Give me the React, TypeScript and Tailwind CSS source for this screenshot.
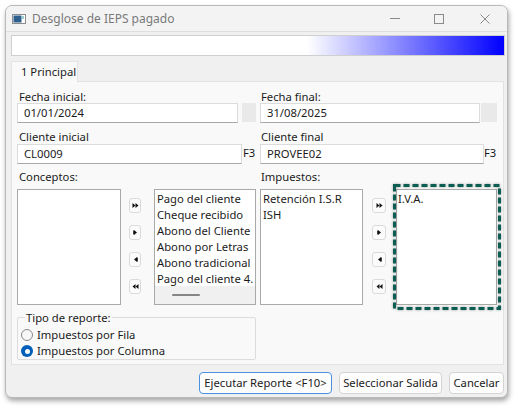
import React from "react";

const font = { fontFamily: '"Noto Sans", "Open Sans", sans-serif' };

function Arrow({ dir }: { dir: "rr" | "r" | "l" | "ll" }) {
  const pts: Record<string, string[]> = {
    rr: ["0.5,0 3.5,2.5 0.5,5", "3.5,0 6.5,2.5 3.5,5"],
    r: ["2,0 5,2.5 2,5"],
    l: ["5,0 2,2.5 5,5"],
    ll: ["3.5,0 0.5,2.5 3.5,5", "6.5,0 3.5,2.5 6.5,5"],
  };
  return (
    <svg width="7" height="5" viewBox="0 0 7 5">
      {pts[dir].map((p, i) => (
        <polygon key={i} points={p} fill="#111" />
      ))}
      {dir === "r" && <rect x="1" y="0.5" width="0.8" height="4" fill="#111" />}
      {dir === "l" && <rect x="5.2" y="0.5" width="0.8" height="4" fill="#111" />}
    </svg>
  );
}

function ArrowButtons({ w }: { w: string }) {
  const dirs: ("rr" | "r" | "l" | "ll")[] = ["rr", "r", "l", "ll"];
  return (
    <div className={`${w} flex flex-col pt-[9px] gap-[12px]`}>
      {dirs.map((d) => (
        <div
          key={d}
          className="h-[15px] w-full flex items-center justify-center bg-[#fbfbfb] border border-[#dadada] rounded-[3px]"
        >
          <Arrow dir={d} />
        </div>
      ))}
    </div>
  );
}

function Label({ children, cls = "" }: { children: React.ReactNode; cls?: string }) {
  return <div className={`h-[13px] leading-[13px] text-[#1b1b1b] ${cls}`}>{children}</div>;
}

function Input({ value, w }: { value: string; w: string }) {
  return (
    <div
      className={`${w} h-[20px] bg-white border border-[#dcdcdc] border-b-[#a8a8a8] pl-[6px] leading-[18px] text-[#1b1b1b]`}
    >
      {value}
    </div>
  );
}

export default function App() {
  const conceptos = [
    "Pago del cliente",
    "Cheque recibido",
    "Abono del Cliente",
    "Abono por Letras",
    "Abono tradicional",
    "Pago del cliente 4.",
  ];
  return (
    <div className="w-[518px] h-[409px] bg-white pt-[5px] pl-[5px] text-[11.25px]" style={font}>
      <div className="w-[503px] h-[393px] bg-[#f0f0f0] border border-[#b9b9b9] rounded-[7px] shadow-[1px_3px_5px_rgba(0,0,0,0.35)] flex flex-col overflow-hidden">
        {/* Title bar */}
        <div className="h-[26px] bg-[#f3f3f3] border-b border-[#dedede] flex items-center">
          <div className="ml-[6px] w-[14px] h-[10px]">
            <svg width="14" height="10" viewBox="0 0 14 10">
              <rect x="0.5" y="0.5" width="13" height="9" fill="#fff" stroke="#8c8c8c" />
              <rect x="1.5" y="1.5" width="8" height="7" fill="#2f5f8c" />
              <rect x="10.5" y="2" width="1" height="3" fill="#3aa0a0" />
            </svg>
          </div>
          <div className="ml-[6px] text-[12px] text-[#7a7a7a]">Desglose de IEPS pagado</div>
          <div className="ml-auto flex items-center h-full">
            <div className="w-[10px] h-[1px] bg-[#8a8a8a] mr-[34px]" />
            <div className="w-[10px] h-[10px] border border-[#8a8a8a] mr-[36px]" />
            <svg width="10" height="10" viewBox="0 0 10 10" className="mr-[17px]">
              <path d="M0.5 0.5 L9.5 9.5 M9.5 0.5 L0.5 9.5" stroke="#8a8a8a" strokeWidth="1" />
            </svg>
          </div>
        </div>

        <div className="flex-1 pl-[5px] pr-[1px] flex flex-col">
          {/* gradient bar */}
          <div className="mt-[3px] w-[494px] h-[21px] border border-[#cfcfcf] bg-[linear-gradient(to_right,#ffffff_60%,#0000ff)]" />

          {/* tab */}
          <div className="mt-[5px] flex">
            <div className="w-[67px] h-[21px] bg-[#f9f9f9] border border-[#e4e4e4] border-b-0 pl-[9px] leading-[20px] whitespace-nowrap text-[#1b1b1b] relative z-10 -mb-px">
              1 Principal
            </div>
          </div>

          {/* panel */}
          <div className="w-[493px] h-[284px] bg-[#f9f9f9] border border-[#e2e2e2] pl-[5px] pt-[8px] flex flex-col">
            <div className="flex gap-[4px]">
              {/* left column */}
              <div className="w-[239px] flex flex-col">
                <Label cls="pl-[2px]">Fecha inicial:</Label>
                <div className="flex">
                  <Input value="01/01/2024" w="w-[221px]" />
                  <div className="ml-[4px] w-[14px] h-[19px] bg-[#e9e9e9]" />
                </div>
                <Label cls="pl-[2px] mt-[7px]">Cliente inicial</Label>
                <div className="flex mt-[1px]">
                  <Input value="CL0009" w="w-[225px]" />
                  <div className="w-[14px] h-[20px] leading-[18px] pl-[1px] text-[#1b1b1b]">F3</div>
                </div>
                <Label cls="pl-[2px] mt-[6px]">Conceptos:</Label>
                <div className="flex mt-[6px] h-[116px]">
                  <div className="w-[104px] h-full bg-white border border-[#a9a9a9]" />
                  <div className="w-[8px]" />
                  <ArrowButtons w="w-[12px]" />
                  <div className="w-[13px]" />
                  <div className="w-[102px] h-full bg-white border border-[#a9a9a9] flex flex-col overflow-hidden">
                    <div className="flex-1 pt-[1px] pl-[2px] overflow-hidden">
                      {conceptos.map((c) => (
                        <div key={c} className="h-[16px] leading-[16px] whitespace-nowrap text-[#1b1b1b]">
                          {c}
                        </div>
                      ))}
                    </div>
                    <div className="h-[18px] bg-[#f0f0f0] flex items-center shrink-0">
                      <div className="ml-[17px] w-[28px] h-[2px] rounded-full bg-[#858585]" />
                    </div>
                  </div>
                </div>
              </div>

              {/* right column */}
              <div className="w-[237px] flex flex-col">
                <Label cls="pl-[1px]">Fecha final:</Label>
                <div className="flex">
                  <Input value="31/08/2025" w="w-[221px]" />
                  <div className="ml-[1px] w-[16px] h-[19px] bg-[#e9e9e9]" />
                </div>
                <Label cls="pl-[1px] mt-[7px]">Cliente final</Label>
                <div className="flex mt-[1px]">
                  <Input value="PROVEE02" w="w-[224px]" />
                  <div className="w-[13px] h-[20px] leading-[18px] text-[#1b1b1b]">F3</div>
                </div>
                <Label cls="pl-[1px] mt-[6px]">Impuestos:</Label>
                <div className="flex mt-[6px] h-[116px]">
                  <div className="w-[103px] h-full bg-white border border-[#a9a9a9] pt-[1px] pl-[2px]">
                    <div className="h-[16px] leading-[16px] text-[#1b1b1b] whitespace-nowrap">Retención I.S.R</div>
                    <div className="h-[16px] leading-[16px] text-[#1b1b1b]">ISH</div>
                  </div>
                  <div className="w-[9px]" />
                  <ArrowButtons w="w-[14px]" />
                  <div className="w-[10px]" />
                  <div className="relative w-[101px] h-full bg-white border border-[#a9a9a9] pt-[1px] pl-[1px]">
                    <div className="h-[16px] leading-[16px] text-[#1b1b1b]">I.V.A.</div>
                    <svg
                      className="absolute left-[-4px] top-[-6px] pointer-events-none"
                      width="109"
                      height="127"
                      viewBox="0 0 109 127"
                      style={{ filter: "drop-shadow(0 0 1.5px rgba(0,0,0,0.35))" }}
                    >
                      <rect
                        x="1.5"
                        y="1.5"
                        width="105"
                        height="123"
                        fill="none"
                        stroke="#0d5c52"
                        strokeWidth="3"
                        strokeDasharray="6 3"
                      />
                    </svg>
                  </div>
                </div>
              </div>
            </div>

            {/* group box */}
            <fieldset className="mt-[6px] w-[239px] border border-[#dcdcdc] rounded-[2px] pt-[3px] pb-0 min-w-0">
              <legend className="ml-[7px] px-[1px] h-[13px] leading-[13px] text-[#1b1b1b]">Tipo de reporte:</legend>
              <div className="flex items-center h-[16px] pl-[3px]">
                <div className="w-[12px] h-[12px] rounded-full border border-[#8a8a8a] bg-[#f7f7f7]" />
                <div className="ml-[4px] text-[#1b1b1b]">Impuestos por Fila</div>
              </div>
              <div className="flex items-center h-[16px] pl-[3px]">
                <div className="w-[12px] h-[12px] rounded-full bg-[#005fb8] flex items-center justify-center">
                  <div className="w-[5px] h-[5px] rounded-full bg-white" />
                </div>
                <div className="ml-[4px] text-[#1b1b1b]">Impuestos por Columna</div>
              </div>
            </fieldset>
          </div>

          {/* bottom buttons */}
          <div className="mt-[7px] flex justify-end pr-[2px] gap-[7px]">
            <div className="w-[133px] h-[22px] bg-[#fdfdfd] border border-[#4a90e0] rounded-[4px] flex items-center justify-center text-[#1b1b1b]">
              Ejecutar Reporte &lt;F10&gt;
            </div>
            <div className="w-[103px] h-[22px] bg-[#fdfdfd] border border-[#d3d3d3] rounded-[4px] flex items-center justify-center text-[#1b1b1b]">
              Seleccionar Salida
            </div>
            <div className="w-[55px] h-[22px] bg-[#fdfdfd] border border-[#d3d3d3] rounded-[4px] flex items-center justify-center text-[#1b1b1b]">
              Cancelar
            </div>
          </div>
        </div>
      </div>
    </div>
  );
}
